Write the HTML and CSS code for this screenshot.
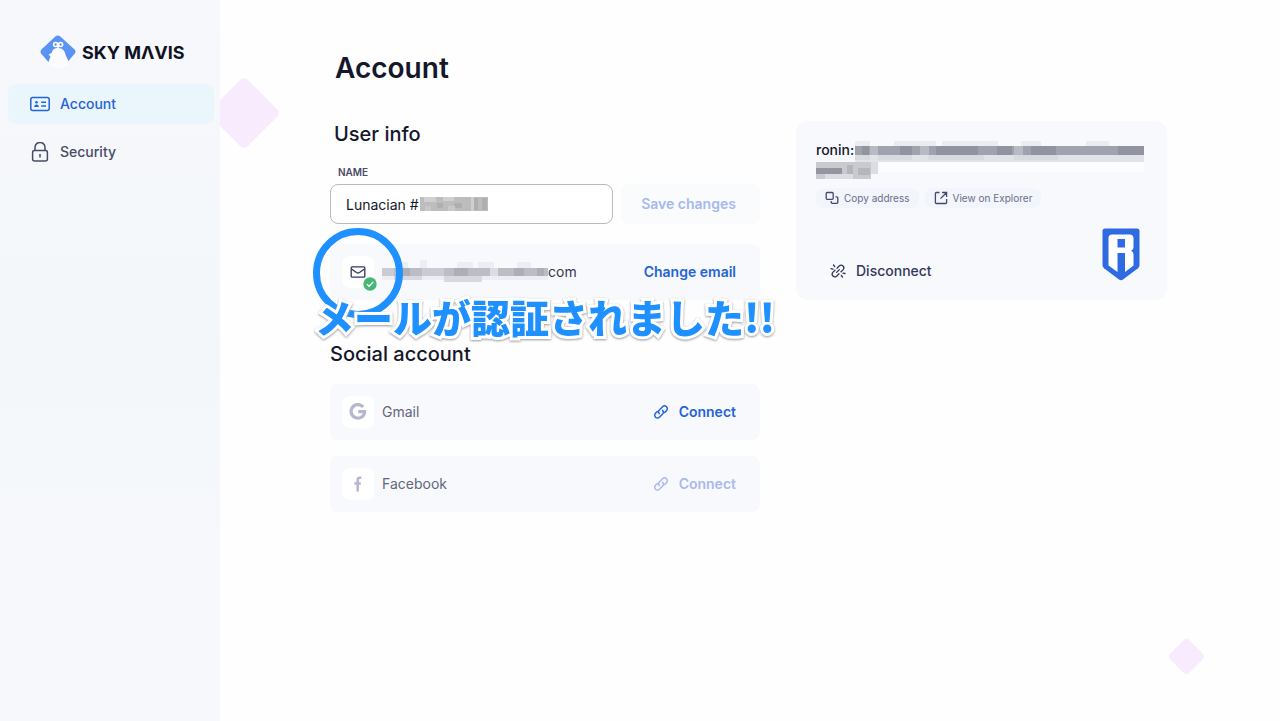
FILE: index.html
```html
<!DOCTYPE html>
<html lang="en">
<head>
<meta charset="utf-8">
<meta name="viewport" content="width=device-width, initial-scale=1">
<title>Account</title>
<link rel="stylesheet" href="styles.css">
</head>
<body>
<div class="layout">
  <aside class="sidebar">
    <a class="brand" href="#" aria-label="Sky Mavis">
      <svg class="brand-mark" viewBox="0 0 36 36" aria-hidden="true">
        <path d="M15.600 1.200q2.200-1.400 4.400 0L34.600 14.600q1.600 2 .2 4L27.600 27H8.400L1 18.600q-1.200-2 .4-4z" fill="#5b93f5"/>
        <path d="M8.500 19.500l3.200-1.500c1-3.800 3.200-5 6.300-5 4.600 0 7 2.800 7.600 7l3 6.500c1 2-1 4-3 4.500C22 34 14 34 10.500 31c-2-1.600-2.500-2.500-2-4l2-5.500z" fill="#fbfcfe"/>
        <path d="M16 11h4l-2 2.600z" fill="#fff"/>
        <g fill="#5b93f5" stroke="#fff" stroke-width="1.600"><circle cx="15.600" cy="9.500" r="2"/><circle cx="20.600" cy="9.500" r="2"/></g>
      </svg>
      <span>SKY MΛVIS</span>
    </a>
    <nav class="nav">
      <a class="nav-item active" href="#">
        <svg width="20" height="20" viewBox="0 0 20 20" fill="none" stroke="currentColor" stroke-width="1.500" aria-hidden="true"><rect x=".8" y="3.500" width="18.400" height="13" rx="2"/><circle cx="6.500" cy="8.300" r="1.300" fill="currentColor" stroke="none"/><path d="M4.200 12.900c.2-3.200 4.400-3.200 4.600 0z" fill="currentColor" stroke="none"/><path d="M11.200 8.200h4.800M11.200 12h4.800"/></svg>
        <span>Account</span>
      </a>
      <a class="nav-item" href="#">
        <svg width="20" height="20" viewBox="0 0 20 20" fill="none" stroke="currentColor" stroke-width="1.500" aria-hidden="true"><rect x="2.600" y="8.500" width="14.800" height="10.500" rx="2"/><path d="M5 8.500V5.400a5 5 0 0 1 10 0v3.100M10 12v3.500"/></svg>
        <span>Security</span>
      </a>
    </nav>
  </aside>

  <main class="main">
    <span class="diamond diamond-large"></span>
    <span class="diamond diamond-small"></span>
    <h1 class="title">Account</h1>
    <div class="columns">
      <div class="profile">
        <h2 class="heading heading-inset">User info</h2>
        <form class="name-form">
          <label class="label" for="name">Name</label>
          <div class="name-row">
            <div class="field">
              <input class="input" id="name" type="text" value="Lunacian #">
              <svg class="mosaic mosaic-name" width="68" height="14" viewBox="0 0 68 14" shape-rendering="crispEdges" aria-hidden="true"><path fill="#bdbdbd" d="M0 0h68v14H0z"/><path fill="#d0d0d0" d="M4 0h12v5H4zM23 0h11v4H23zM51 0h3v14h-3z"/><path fill="#afafaf" d="M17 6h6v5h-6zM34 6h8v5h-8zM54 1h4v12h-4zM62 1h5v12h-5z"/><path fill="#c8c8c8" d="M28 9h7v5h-7zM5 9h6v5H5z"/></svg>
            </div>
            <button class="save" type="submit" disabled>Save changes</button>
          </div>
        </form>

        <section class="account-row email-row">
          <span class="tile mail">
            <svg width="16" height="16" viewBox="0 0 16 16" fill="none" stroke="#32375c" stroke-width="1.300" stroke-linejoin="round" aria-hidden="true"><rect x="1.200" y="2.800" width="13.600" height="10.400" rx="1"/><path d="M1.500 5l5 3.500q1.500 1 3 0l5-3.500"/></svg>
            <svg class="verified" width="14" height="14" viewBox="0 0 14 14" aria-hidden="true"><circle cx="7" cy="7" r="6.700" fill="#48b775"/><path d="M3.800 7.100l2.300 2.200 4.200-4.400" fill="none" stroke="#fff" stroke-width="1.300"/></svg>
          </span>
          <svg class="mosaic mosaic-email" width="166" height="24" viewBox="0 0 166 24" shape-rendering="crispEdges" aria-hidden="true"><path fill="#dcdde3" d="M0 8h166v8H0z"/><path fill="#eceef3" d="M18 2h8v6h-8zM38 0h7v8h-7zM75 2h16v6H75zM96 2h16v6H96zM135 2h14v6h-14zM0 16h166v4H0z"/><path fill="#d8d9df" d="M12 16h28v4H12zM62 16h38v6H62z"/><path fill="#bcbdc5" d="M12 8h28v8H12zM62 8h46v8H62zM116 8h50v8h-50z"/><path fill="#cbccd3" d="M0 8h12v8H0zM40 8h22v8H40z"/><path fill="#adaeb6" d="M18 8h10v8H18zM72 8h14v8H72zM132 8h10v8h-10zM155 8h7v8h-7z"/></svg>
          <span class="email">com</span>
          <button class="link-button" type="button">Change email</button>
        </section>

        <h2 class="heading">Social account</h2>
        <div class="social-list">
          <section class="account-row">
            <span class="tile"><svg width="18" height="18" viewBox="0 0 18 18" fill="none" stroke="#b6b6ce" stroke-width="3.200" aria-hidden="true"><path d="M14.200 4.100A6.800 6.800 0 1 0 15.700 8.700H9.200"/></svg></span>
            <span class="provider">Gmail</span>
            <button class="link-button" type="button">
              <svg width="16" height="16" viewBox="0 0 16 16" fill="none" stroke="currentColor" stroke-width="1.500" stroke-linecap="round" aria-hidden="true"><path id="chain" d="M6.300 9.600a2.700 2.700 0 0 1 .3-3.800l3-3a2.700 2.700 0 0 1 3.900 3.900l-1.800 1.800M9.700 6.400a2.700 2.700 0 0 1-.3 3.800l-3 3a2.700 2.700 0 0 1-3.900-3.900l1.800-1.800"/></svg>
              <span>Connect</span>
            </button>
          </section>
          <section class="account-row">
            <span class="tile"><svg width="18" height="18" viewBox="0 0 18 18" fill="none" stroke="#b6b6ce" stroke-width="2.500" aria-hidden="true"><path d="M12.300 2.800h-1.500Q8.700 2.800 8.700 5v11.500M5.400 8.500h6.400"/></svg></span>
            <span class="provider">Facebook</span>
            <button class="link-button" type="button" disabled>
              <svg width="16" height="16" viewBox="0 0 16 16" fill="none" stroke="currentColor" stroke-width="1.500" stroke-linecap="round" aria-hidden="true"><use href="#chain"/></svg>
              <span>Connect</span>
            </button>
          </section>
        </div>
      </div>

      <section class="wallet">
        <div class="address">
          <span>ronin:</span>
          <svg class="mosaic mosaic-address" width="328" height="40" viewBox="0 0 328 40" shape-rendering="crispEdges" aria-hidden="true"><path fill="#eaecf1" d="M39 1h15v5H39zM78 1h42v5H78zM126 1h56v5h-56zM205 1h20v5h-20zM270 1h23v5h-23z"/><path fill="#e1e3e8" d="M39 15h289v7H39z"/><path fill="#d8dae0" d="M39 15h15v5H39zM62 15h34v5H62zM112 15h56v5h-56zM198 15h44v5h-44z"/><path fill="#a0a2ad" d="M39 6h289v9H39z"/><path fill="#b9bbc4" d="M54 6h8v9h-8zM104 6h9v9h-9zM198 6h9v9h-9z"/><path fill="#9193a0" d="M46 6h7v9h-7zM84 6h12v9H84zM120 6h42v9h-42zM181 6h15v9h-15zM215 6h25v9h-25zM302 6h26v9h-26z"/><path fill="#fbfcfe" d="M64 22h264v10H64z"/><path fill="#c9cad0" d="M0 22h55v17H0z"/><path fill="#dcdde2" d="M9 34h28v5H9zM55 22h7v12h-7z"/><path fill="#94959f" d="M0 28h26v6H0z"/><path fill="#b5b6bd" d="M31 25h6v9h-6zM42 28h12v7H42z"/></svg>
        </div>
        <div class="chips">
          <button class="chip" type="button">
            <svg width="14" height="14" viewBox="0 0 14 14" fill="none" stroke="#45496a" stroke-width="1.300" aria-hidden="true"><rect x="1.200" y="1.500" width="7" height="6.800" rx="1"/><path d="M10.500 5.800h1.300q1 0 1 1v4.500q0 1-1 1H7.200q-1 0-1-1V10"/></svg>
            <span>Copy address</span>
          </button>
          <button class="chip" type="button">
            <svg width="14" height="14" viewBox="0 0 14 14" fill="none" stroke="#45496a" stroke-width="1.300" aria-hidden="true"><path d="M5.500 1.500H2.400q-1 0-1 1v9q0 1 1 1h9.200q1 0 1-1V8M8 1.500h4.600V6M12.400 1.700L6.500 7.600"/></svg>
            <span>View on Explorer</span>
          </button>
        </div>
        <div class="wallet-footer">
          <button class="disconnect" type="button">
            <svg width="16" height="16" viewBox="0 0 16 16" fill="none" stroke="currentColor" stroke-width="1.300" stroke-linecap="round" aria-hidden="true"><path d="M7 5.200l2.400-2.400a2.700 2.700 0 0 1 3.800 3.800L11 8.800M9 10.800l-2.400 2.400a2.700 2.700 0 0 1-3.800-3.800L5 7.200M6.600 9.400l2.800-2.800M1 5.700l2 .4M3.500 2l1.200 1.500M15 10.500l-2-.4M12.500 14l-1.200-1.500"/></svg>
            <span>Disconnect</span>
          </button>
          <svg class="ronin" width="38" height="53" viewBox="0 0 38 53" aria-hidden="true">
            <path d="M3 .5h32q2.500 0 2.500 2.500v34q0 2-1.500 3.200L21 51.500q-2 1.500-4 0L2 40.200Q.5 39 .5 37V3Q.5.5 3 .5z" fill="#2e6be2"/>
            <path d="M10 6.500h17.500q4 0 4 4v9q0 2-2.300 3.200Q31.500 24 31.500 26v11.500L23 44V25h-7.500v19L6.500 37.500V10q0-3.500 3.500-3.500z" fill="#fff"/>
            <path d="M15.500 11h7.500v8.500h-7.500z" fill="#2e6be2"/>
          </svg>
        </div>
      </section>
    </div>
  </main>
</div>
<svg class="ring" width="90" height="90" viewBox="0 0 90 90" aria-hidden="true"><circle cx="45" cy="45" r="41.500" fill="none" stroke="#1e90ff" stroke-width="7"/></svg>
<p class="callout" lang="ja">メールが認証されました!!</p>
</body>
</html>
```
FILE: styles.css
```css
* {
  box-sizing: border-box;
}

body {
  margin: 0;
  position: relative;
  background: #fefefe;
  color: #15172a;
  font-family: Inter, "Noto Sans CJK JP", sans-serif;
  font-size: 14px;
  line-height: 20px;
}

h1, h2, p {
  margin: 0;
}

button {
  border: 0;
  padding: 0;
  background: none;
  font: inherit;
  color: inherit;
}

svg {
  display: block;
  flex-shrink: 0;
}

.layout {
  display: flex;
  min-height: 100vh;
}

.sidebar {
  position: relative;
  z-index: 1;
  flex: 0 0 220px;
  padding: 35px 8px;
  background: linear-gradient(#f7f8fc, #f3f7fa 50%, #f6f8fc 75%);
}

.brand {
  display: flex;
  align-items: center;
  gap: 6px;
  height: 35px;
  padding-left: 32px;
  color: #10121f;
  font-size: 18px;
  font-weight: 700;
  text-decoration: none;
  white-space: nowrap;
}

.brand-mark {
  width: 36px;
  height: 36px;
}

.nav {
  display: grid;
  gap: 8px;
  margin-top: 14px;
}

.nav-item {
  display: flex;
  align-items: center;
  gap: 10px;
  height: 40px;
  margin-right: -2px;
  padding-left: 22px;
  border-radius: 8px;
  color: #484b66;
  font-weight: 500;
  text-decoration: none;
}

.nav-item.active {
  background: #eaf5fc;
  color: #2463d8;
}

.main {
  position: relative;
  flex: 1;
  min-width: 0;
  padding: 50px 113px 40px 110px;
}

.diamond {
  position: absolute;
  transform: rotate(45deg);
  background: #f7ebfd;
}

.diamond-large {
  top: 87px;
  left: -2px;
  width: 52px;
  height: 52px;
  border-radius: 5px;
}

.diamond-small {
  right: 80px;
  bottom: 51px;
  width: 27px;
  height: 27px;
  border-radius: 4px;
}

.title {
  padding-left: 5px;
  font-size: 28px;
  font-weight: 600;
  line-height: 36px;
}

.columns {
  display: grid;
  grid-template-columns: minmax(0, 430fr) minmax(0, 371fr);
  gap: 36px;
  align-items: start;
  margin-top: 35px;
}

.heading {
  font-size: 20px;
  font-weight: 500;
  line-height: 28px;
}

.heading-inset {
  padding-left: 4px;
  line-height: 26px;
}

.label {
  display: block;
  margin: 19px 8px 6px;
  color: #484b66;
  font-size: 10px;
  font-weight: 600;
  line-height: 12px;
  text-transform: uppercase;
}

.name-row {
  display: flex;
  gap: 8px;
}

.field {
  position: relative;
  flex: 1;
}

.input {
  width: 100%;
  height: 40px;
  padding: 0 15px;
  border: 1px solid #b9bac4;
  border-radius: 8px;
  background: #fff;
  color: #15172a;
  font: inherit;
}

.mosaic-name {
  position: absolute;
  top: 13px;
  left: 90px;
}

.save {
  flex: 0 0 139px;
  padding-right: 4px;
  border-radius: 8px;
  background: #fafbfd;
  color: #a6b9ef;
  font-weight: 600;
}

.account-row {
  display: flex;
  align-items: center;
  height: 56px;
  padding: 0 24px 0 12px;
  border-radius: 8px;
  background: #f7f9fc;
}

.email-row {
  margin: 20px 0 40px;
}

.tile {
  position: relative;
  display: grid;
  place-items: center;
  width: 32px;
  height: 32px;
  margin-right: 8px;
  border-radius: 8px;
  background: #fff;
}

.verified {
  position: absolute;
  right: -3px;
  bottom: -3px;
}

.email {
  color: #35374a;
}

.provider {
  color: #64677d;
}

.link-button {
  display: flex;
  align-items: center;
  gap: 10px;
  margin-left: auto;
  color: #2463d8;
  font-weight: 600;
}

.link-button:disabled {
  color: #abb9ef;
}

.social-list {
  display: grid;
  gap: 16px;
  margin-top: 16px;
}

.wallet {
  padding: 19px 27px 19px 20px;
  border-radius: 12px;
  background: #f7f9fc;
}

.address {
  position: relative;
  height: 40px;
  font-weight: 500;
}

.mosaic-address {
  position: absolute;
  top: 0;
  left: 0;
}

.chips {
  display: flex;
  gap: 6px;
  margin-top: 8px;
}

.chip {
  display: flex;
  align-items: center;
  gap: 5px;
  height: 20px;
  padding: 0 9px;
  border-radius: 8px;
  background: #f2f5fc;
  color: #6b6e84;
  font-size: 10px;
}

.wallet-footer {
  display: flex;
  align-items: flex-end;
  justify-content: space-between;
  margin-top: 20px;
}

.disconnect {
  display: flex;
  align-items: center;
  gap: 10px;
  margin-left: 14px;
  color: #343858;
  font-weight: 500;
}

.ring {
  position: absolute;
  z-index: 2;
  top: 228px;
  left: 313px;
}

.callout {
  position: absolute;
  z-index: 3;
  top: 296px;
  left: 315px;
  color: #1e90ff;
  font-family: "Noto Sans CJK JP", sans-serif;
  font-size: 39px;
  font-weight: 900;
  line-height: 40px;
  white-space: nowrap;
  -webkit-text-stroke: 6px #fff;
  paint-order: stroke fill;
  filter: drop-shadow(0 1px 1px #999);
}
```
